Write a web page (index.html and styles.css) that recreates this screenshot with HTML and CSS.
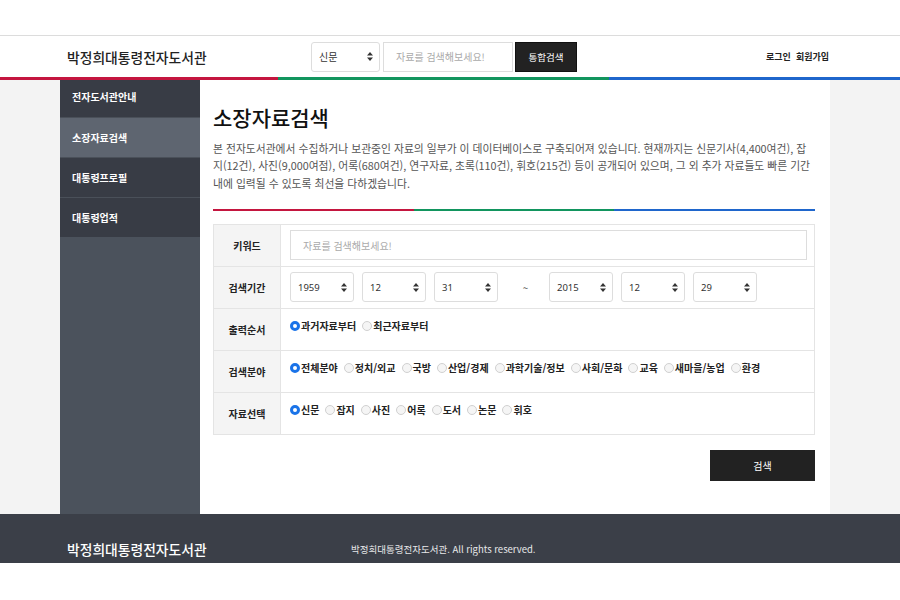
FILE: index.html
```html
<!DOCTYPE html>
<html lang="ko">
<head>
<meta charset="utf-8">
<title>소장자료검색</title>
<link rel="stylesheet" href="styles.css">
</head>
<body>
<div class="topspace"></div>
<header class="header">
  <div class="container header-inner">
    <div class="logo">박정희대통령전자도서관</div>
    <div class="search">
      <div class="hselect"><span>신문</span>
        <svg class="arr" width="6" height="9" viewBox="0 0 6 9"><path d="M3 0L6 3.5H0Z M3 9L0 5.5H6Z" fill="#333"/></svg>
      </div>
      <div class="hinput">자료를 검색해보세요!</div>
      <div class="hbtn">통합검색</div>
    </div>
    <div class="util"><span>로그인</span><span>회원가입</span></div>
  </div>
</header>
<div class="colorbar"><i class="c-red"></i><i class="c-green"></i><i class="c-blue"></i></div>
<div class="wrap">
  <div class="container layout">
    <nav class="side">
      <div class="menu-item first">전자도서관안내</div>
      <div class="menu-item active">소장자료검색</div>
      <div class="menu-item">대통령프로필</div>
      <div class="menu-item">대통령업적</div>
    </nav>
    <main class="main">
      <h1 class="title">소장자료검색</h1>
      <p class="desc">본 전자도서관에서 수집하거나 보관중인 자료의 일부가 이 데이터베이스로 구축되어져 있습니다. 현재까지는 신문기사(4,400여건), 잡지(12건), 사진(9,000여점), 어록(680여건), 연구자료, 초록(110건), 휘호(215건) 등이 공개되어 있으며, 그 외 추가 자료들도 빠른 기간 내에 입력될 수 있도록 최선을 다하겠습니다.</p>
      <div class="divider"><i class="d-red"></i><i class="d-green"></i><i class="d-blue"></i></div>
      <div class="form">
        <div class="row">
          <div class="label">키워드</div>
          <div class="field"><div class="kinput">자료를 검색해보세요!</div></div>
        </div>
        <div class="row">
          <div class="label">검색기간</div>
          <div class="field dates">
            <div class="sel"><span>1959</span><svg width="6" height="9" viewBox="0 0 6 9"><path d="M3 0L6 3.5H0Z M3 9L0 5.5H6Z" fill="#333"/></svg></div>
            <div class="sel"><span>12</span><svg width="6" height="9" viewBox="0 0 6 9"><path d="M3 0L6 3.5H0Z M3 9L0 5.5H6Z" fill="#333"/></svg></div>
            <div class="sel"><span>31</span><svg width="6" height="9" viewBox="0 0 6 9"><path d="M3 0L6 3.5H0Z M3 9L0 5.5H6Z" fill="#333"/></svg></div>
            <div class="tilde">~</div>
            <div class="sel"><span>2015</span><svg width="6" height="9" viewBox="0 0 6 9"><path d="M3 0L6 3.5H0Z M3 9L0 5.5H6Z" fill="#333"/></svg></div>
            <div class="sel"><span>12</span><svg width="6" height="9" viewBox="0 0 6 9"><path d="M3 0L6 3.5H0Z M3 9L0 5.5H6Z" fill="#333"/></svg></div>
            <div class="sel"><span>29</span><svg width="6" height="9" viewBox="0 0 6 9"><path d="M3 0L6 3.5H0Z M3 9L0 5.5H6Z" fill="#333"/></svg></div>
          </div>
        </div>
        <div class="row">
          <div class="label">출력순서</div>
          <div class="field radios">
            <span class="radio on"><i></i>과거자료부터</span>
            <span class="radio"><i></i>최근자료부터</span>
          </div>
        </div>
        <div class="row">
          <div class="label">검색분야</div>
          <div class="field radios">
            <span class="radio on"><i></i>전체분야</span>
            <span class="radio"><i></i>정치/외교</span>
            <span class="radio"><i></i>국방</span>
            <span class="radio"><i></i>산업/경제</span>
            <span class="radio"><i></i>과학기술/정보</span>
            <span class="radio"><i></i>사회/문화</span>
            <span class="radio"><i></i>교육</span>
            <span class="radio"><i></i>새마을/농업</span>
            <span class="radio"><i></i>환경</span>
          </div>
        </div>
        <div class="row">
          <div class="label">자료선택</div>
          <div class="field radios">
            <span class="radio on"><i></i>신문</span>
            <span class="radio"><i></i>잡지</span>
            <span class="radio"><i></i>사진</span>
            <span class="radio"><i></i>어록</span>
            <span class="radio"><i></i>도서</span>
            <span class="radio"><i></i>논문</span>
            <span class="radio"><i></i>휘호</span>
          </div>
        </div>
      </div>
      <div class="actions"><div class="btn">검색</div></div>
    </main>
  </div>
</div>
<footer class="footer">
  <div class="container footer-inner">
    <div class="flogo">박정희대통령전자도서관</div>
    <div class="copy">박정희대통령전자도서관. All rights reserved.</div>
  </div>
</footer>
</body>
</html>
```
FILE: styles.css
```css
* { box-sizing: border-box; }
body {
  margin: 0;
  background: #fff;
  font-family: "Noto Sans CJK KR", "Noto Sans", sans-serif;
  color: #222;
}
.container { width: 770px; margin-left: 60px; }
.topspace { height: 35px; }
.header { border-top: 1px solid #dcdcdc; height: 42px; }
.header-inner { display: flex; align-items: center; height: 41px; padding: 0 1px 0 7px; }
.logo { font-size: 13.8px; font-weight: 500; color: #222; width: 244px; }
.search { display: flex; align-items: center; height: 30px; }
.hselect {
  width: 69px; height: 30px; border: 1px solid #ddd; border-radius: 3px;
  display: flex; align-items: center; justify-content: space-between;
  padding: 0 6px 0 7px; font-size: 10px; color: #333;
}
.hinput {
  width: 130px; height: 30px; border: 1px solid #ddd; margin-left: 3px;
  font-size: 10px; color: #aaa; display: flex; align-items: center; padding-left: 12px;
}
.hbtn {
  width: 62px; height: 30px; margin-left: 2px; background: #222; color: #fff;
  font-size: 9.5px; display: flex; align-items: center; justify-content: center;
  border: 1px solid #111;
}
.util { margin-left: auto; font-size: 9px; font-weight: 700; color: #222; display: flex; gap: 5px; }
.colorbar { display: flex; height: 3px; }
.colorbar i { display: block; height: 3px; }
.c-red { width: 278px; background: #c4163f; }
.c-green { width: 331px; background: #12955e; }
.c-blue { flex: 1; background: #1f66cc; }
.wrap { background: #f3f3f3; }
.layout { display: flex; height: 434px; }
.side { width: 140px; background: #4b525c; }
.menu-item {
  height: 40px; background: #383c45; color: #fff; font-size: 10px; font-weight: 700;
  display: flex; align-items: center; padding-left: 12px; border-top: 1px solid #4a5059;
}
.menu-item.first { height: 37px; border-top: 0; padding-bottom: 5px; }
.menu-item.active { background: #5e6570; }
.main { flex: 1; background: #fff; padding: 22px 15px 0 13px; }
.title { margin: 0; font-size: 21px; font-weight: 500; line-height: 30px; color: #111; }
.desc { margin: 8px 0 0; font-size: 10.8px; line-height: 17.3px; color: #555; }
.divider { display: flex; height: 2px; margin-top: 17px; }
.divider i { display: block; height: 2px; flex: 1; }
.d-red { background: #c4163f; }
.d-green { background: #12955e; }
.d-blue { background: #1f66cc; }
.form { margin-top: 13px; border: 1px solid #e4e4e4; }
.row { display: flex; height: 42px; border-top: 1px solid #e4e4e4; }
.row:first-child { border-top: 0; height: 41px; }
.label {
  width: 67px; background: #f4f4f4; border-right: 1px solid #e4e4e4;
  display: flex; align-items: center; justify-content: center;
  font-size: 10px; font-weight: 700; color: #222;
}
.field { flex: 1; display: flex; align-items: center; padding: 0 7px 0 9px; }
.kinput {
  width: 100%; height: 30px; border: 1px solid #ddd; font-size: 10px; color: #aaa;
  display: flex; align-items: center; padding-left: 12px;
}
.dates { gap: 8px; }
.sel {
  width: 64px; height: 30px; border: 1px solid #ddd; border-radius: 3px;
  display: flex; align-items: center; justify-content: space-between;
  padding: 0 6px 0 7px; font-size: 9.5px; color: #333; font-family: "Noto Sans", sans-serif;
}
.tilde { width: 35px; text-align: center; font-size: 10px; color: #555; padding-left: 4px; }
.radios { gap: 6px; font-size: 10px; font-weight: 700; color: #222; padding-bottom: 7px; }
.radio { display: flex; align-items: center; }
.radio i {
  display: block; width: 10px; height: 10px; border-radius: 50%;
  border: 1px solid #d0d0d0; background: #f5f5f5; margin-right: 1px;
}
.radio.on i { border: 3px solid #1a73e8; background: #fff; }
.actions { display: flex; justify-content: flex-end; margin-top: 15px; }
.btn {
  width: 105px; height: 31px; background: #222; color: #fff; font-size: 10px;
  display: flex; align-items: center; justify-content: center;
}
.footer { background: #3b3f48; height: 49px; }
.footer-inner { display: flex; align-items: center; height: 49px; padding: 20px 0 0 7px; }
.flogo { font-size: 13.8px; font-weight: 500; color: #fff; width: 284px; }
.copy { font-size: 9.5px; color: #e8e8e8; }
```
